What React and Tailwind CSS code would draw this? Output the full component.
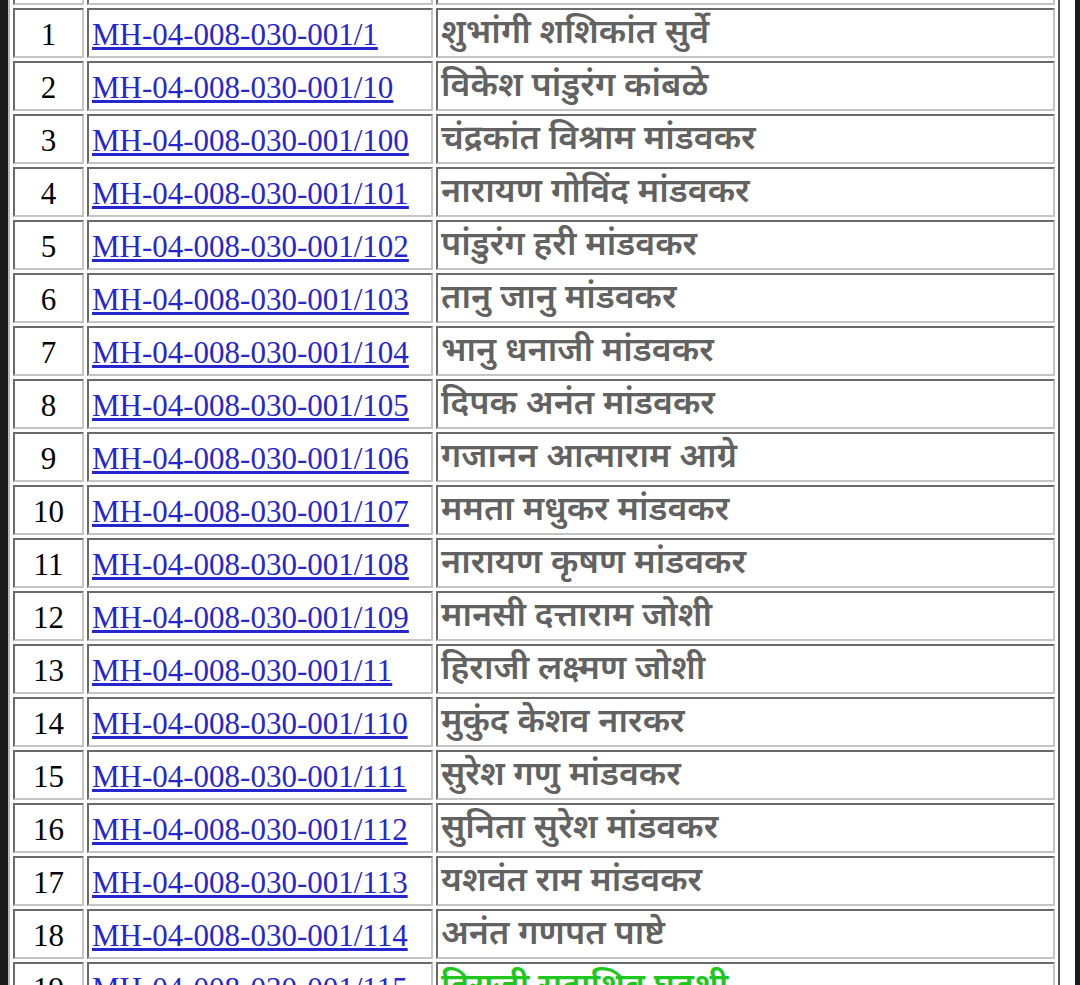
const rows = [
  ["1", "MH-04-008-030-001/1", "शुभांगी शशिकांत सुर्वे"],
  ["2", "MH-04-008-030-001/10", "विकेश पांडुरंग कांबळे"],
  ["3", "MH-04-008-030-001/100", "चंद्रकांत विश्राम मांडवकर"],
  ["4", "MH-04-008-030-001/101", "नारायण गोविंद मांडवकर"],
  ["5", "MH-04-008-030-001/102", "पांडुरंग हरी मांडवकर"],
  ["6", "MH-04-008-030-001/103", "तानु जानु मांडवकर"],
  ["7", "MH-04-008-030-001/104", "भानु धनाजी मांडवकर"],
  ["8", "MH-04-008-030-001/105", "दिपक अनंत मांडवकर"],
  ["9", "MH-04-008-030-001/106", "गजानन आत्माराम आग्रे"],
  ["10", "MH-04-008-030-001/107", "ममता मधुकर मांडवकर"],
  ["11", "MH-04-008-030-001/108", "नारायण कृषण मांडवकर"],
  ["12", "MH-04-008-030-001/109", "मानसी दत्ताराम जोशी"],
  ["13", "MH-04-008-030-001/11", "हिराजी लक्ष्मण जोशी"],
  ["14", "MH-04-008-030-001/110", "मुकुंद केशव नारकर"],
  ["15", "MH-04-008-030-001/111", "सुरेश गणु मांडवकर"],
  ["16", "MH-04-008-030-001/112", "सुनिता सुरेश मांडवकर"],
  ["17", "MH-04-008-030-001/113", "यशवंत राम मांडवकर"],
  ["18", "MH-04-008-030-001/114", "अनंत गणपत पाष्टे"],
  ["19", "MH-04-008-030-001/115", "हिराजी सदाशिव घडशी", true],
];

// inset cell border, like an old border="1" table
const cell =
  "h-[50px] border-2 border-t-[#6a6a6a] border-l-[#6a6a6a] border-b-[#c4c4c4] border-r-[#c4c4c4] px-[3px] py-0 align-middle";

const serif = "font-['Liberation_Serif','Times_New_Roman',serif]";
const deva =
  "font-['Noto_Sans_Devanagari','Mangal','Lohit_Devanagari','Noto_Sans',sans-serif]";

export default function App() {
  return (
    <div className="h-[985px] overflow-hidden bg-[#1b1b1b] pl-[8px] pr-[5px]">
      <div className="h-full overflow-hidden bg-white">
        <table
          className={`-mt-[50px] w-[1052px] table-fixed border-separate border-spacing-x-[3px] border-spacing-y-[3px] border-2 border-t-[#b8b8b8] border-l-[#b8b8b8] border-r-[#555] border-b-[#555] text-[31px] leading-[1.15] ${serif}`}
        >
          <thead>
            <tr>
              <th className={`${cell} w-[71px] font-normal`}>अ.क्र.</th>
              <th className={`${cell} w-[346px] font-normal`}>
                खाता क्रमांक
              </th>
              <th className={`${cell} text-left font-normal`}>नाव</th>
            </tr>
          </thead>
          <tbody>
            {rows.map(([no, code, name, green]) => (
              <tr key={no}>
                <td className={`${cell} pt-[3px] text-center text-black`}>
                  {no}
                </td>
                <td className={`${cell} pt-[3px]`}>
                  <a href="#" className="text-[#2626cf] underline">
                    {code}
                  </a>
                </td>
                <td
                  className={`${cell} ${deva} pt-[5px] text-[34px] leading-[1.1] font-semibold ${
                    green ? "text-[#1ec81e]" : "text-[#626262]"
                  }`}
                >
                  {name}
                </td>
              </tr>
            ))}
          </tbody>
        </table>
      </div>
    </div>
  );
}
